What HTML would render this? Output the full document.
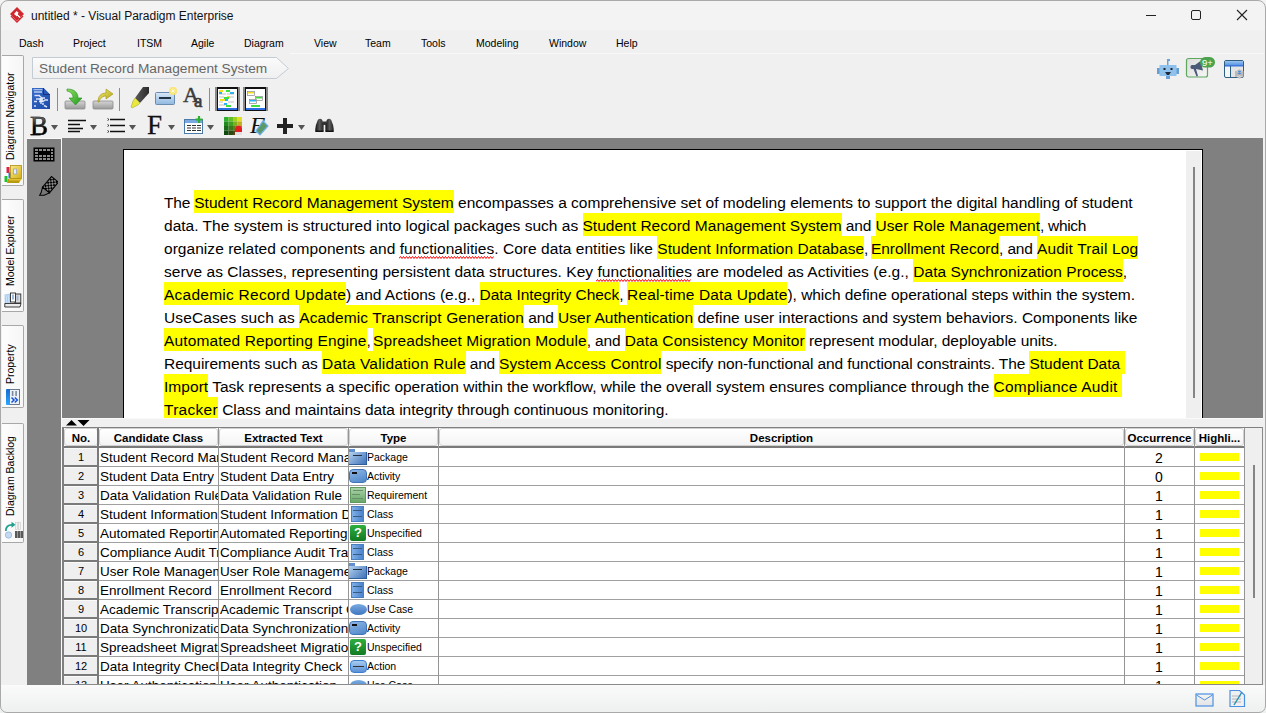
<!DOCTYPE html>
<html><head><meta charset="utf-8">
<style>
*{margin:0;padding:0;box-sizing:border-box}
html,body{width:1266px;height:713px;overflow:hidden;background:#f0f0f0;font-family:"Liberation Sans",sans-serif;color:#000}
.a{position:absolute}
#title{left:0;top:0;width:1266px;height:30px;background:#f3f3f3}
#menubar{left:0;top:31px;width:1266px;height:24px;background:#f0f0f0}
.mi{position:absolute;top:37px;font-size:10.5px;color:#000;white-space:pre}
#canvas{left:62px;top:138px;width:1201px;height:280px;background:#808080;overflow:hidden}
#vtool{left:27px;top:138px;width:34px;height:547px;background:#808080;border-top:1px solid #fafafa}
#page{left:61px;top:11px;width:1080px;height:400px;background:#fff;border:1px solid #000}
.ln{position:absolute;height:23px;line-height:25px;font-size:15.5px;white-space:pre;color:#000}
.hb{position:absolute;height:23px;background:#ffff00}
.h{position:relative}
.h0::before{left:0 !important}
.h::before{content:'';position:absolute;left:-1px;right:0;top:-4px;height:23px;background:#ffff00;z-index:-1}
.sp{}
#tclip{left:0;top:0;width:1263px;height:685px;overflow:hidden}
#tbg{left:62px;top:427px;width:1201px;height:257px;background:#fff}
.hd{position:absolute;top:428px;height:18px;background:linear-gradient(#ffffff,#f4f4f4);border:1px solid #d0d0d0;border-radius:3px;font-weight:bold;font-size:11.5px;line-height:18px;text-align:center;white-space:pre;overflow:hidden}
.rn{position:absolute;left:64px;width:34px;height:19px;background:#efefef;border-top:1px solid #fafafa;border-bottom:2px solid #7a7a7a;font-size:11px;line-height:16px;text-align:center}
.cl{position:absolute;height:18px;font-size:13.5px;line-height:20px;white-space:pre;overflow:hidden}
.ty{position:absolute;left:367px;height:18px;font-size:10.5px;line-height:19px;white-space:pre}
.oc{position:absolute;left:1124px;width:70px;height:18px;font-size:14px;line-height:20px;text-align:center}
.hl{position:absolute;left:1200px;width:39px;height:8px;background:#ffff00}
.gl{position:absolute;left:98px;width:1146px;height:1px;background:#a0a0a0}
.vl{position:absolute;top:428px;width:1px;height:258px;background:#959595}
.tab{position:absolute;left:2px;width:22px;background:linear-gradient(90deg,#fdfdfd,#f6f6f6);border:1px solid #a8a8a8;border-left:none;border-radius:0 2px 2px 0}
.vt{position:absolute;height:11px;font-size:10.5px;line-height:11px;white-space:pre;transform-origin:0 0;transform:rotate(-90deg)}
#status{left:0;top:685px;width:1266px;height:28px;background:linear-gradient(#fafafa,#eef0f0)}
</style></head><body>
<div id="title" class="a">
  <svg class="a" style="left:9px;top:6px" width="16" height="18" viewBox="0 0 16 18">
    <path d="M8 1 L15 8 L8 15 L1 8 Z" fill="#d0282e"/>
    <path d="M2 10 L8 16 L14 10" fill="none" stroke="#d0282e" stroke-width="1.3"/>
    <path d="M5 8 L7.5 5 L9.5 6.5 L8.8 8.5 L11.5 11 L10.3 12.5 Z" fill="#fff"/><path d="M8 10 L11 13" stroke="#d0282e" stroke-width="1"/>
  </svg>
  <div class="a" style="left:31px;top:9px;font-size:12px;white-space:pre;color:#111">untitled * - Visual Paradigm Enterprise</div>
  <div class="a" style="left:1146px;top:15px;width:10px;height:1px;background:#222"></div>
  <div class="a" style="left:1191px;top:10px;width:10px;height:10px;border:1px solid #222;border-radius:2px"></div>
  <svg class="a" style="left:1236px;top:9px" width="12" height="12" viewBox="0 0 12 12"><path d="M1 1 L11 11 M11 1 L1 11" stroke="#222" stroke-width="1.1"/></svg>
</div>
<div id="menubar" class="a"></div>
<div class="a" style="left:290px;top:53px;width:974px;height:1px;background:#f8f8f8"></div>
<div class="mi" style="left:19px">Dash</div><div class="mi" style="left:73px">Project</div><div class="mi" style="left:137px">ITSM</div><div class="mi" style="left:191px">Agile</div><div class="mi" style="left:244px">Diagram</div><div class="mi" style="left:314px">View</div><div class="mi" style="left:365px">Team</div><div class="mi" style="left:421px">Tools</div><div class="mi" style="left:476px">Modeling</div><div class="mi" style="left:549px">Window</div><div class="mi" style="left:616px">Help</div>
<!-- breadcrumb -->
<svg class="a" style="left:31px;top:56px" width="260" height="24" viewBox="0 0 260 24">
  <defs><linearGradient id="bcg" x1="0" y1="0" x2="0" y2="1"><stop offset="0" stop-color="#fbfbfb"/><stop offset="1" stop-color="#efefef"/></linearGradient></defs>
  <path d="M1.5 1.5 H245.5 L257.5 12.5 L245.5 22.5 H1.5 Z" fill="url(#bcg)" stroke="#c3ccd4" stroke-width="1"/>
</svg>
<div class="a" style="left:39px;top:61px;font-size:13.7px;color:#666;white-space:pre">Student Record Management System</div>
<!-- right icons -->
<svg class="a" style="left:1156px;top:58px" width="24" height="22" viewBox="0 0 24 22">
  <rect x="11" y="1" width="1.5" height="6" fill="#6aa0d8"/><rect x="12" y="1" width="2" height="2" fill="#6aa0d8"/>
  <rect x="1" y="10" width="3" height="6" fill="#6a9ed0"/><rect x="20" y="10" width="3" height="6" fill="#6a9ed0"/>
  <rect x="3.5" y="7" width="17" height="11" fill="#8ec2ec"/>
  <rect x="7.5" y="10" width="2" height="2" fill="#223"/><rect x="14.5" y="10" width="2" height="2" fill="#223"/>
  <path d="M9 14 h6 l-2 3 h-2z" fill="#1e2a3a"/>
  <rect x="10" y="18" width="4" height="3" fill="#6aa0d8"/>
</svg>
<svg class="a" style="left:1185px;top:56px" width="32" height="24" viewBox="0 0 32 24">
  <defs><linearGradient id="mg" x1="0" y1="0" x2="1" y2="1"><stop offset="0" stop-color="#dcdcdc"/><stop offset="1" stop-color="#f6f6f6"/></linearGradient></defs>
  <rect x="1.5" y="2.5" width="21" height="18.5" rx="2" fill="url(#mg)" stroke="#5ea85e" stroke-width="1.2"/>
  <path d="M5.5 10.5 C5.5 9.5 6.5 9 7.5 9 L10 9 L15.5 5 L18 14.5 L11 13 L13 20 L11.5 20.5 L8.5 13 L7 13 C6 13 5.5 12 5.5 11 Z" fill="#4b5a78"/>
  <rect x="15" y="1" width="15" height="10.5" rx="5.2" fill="#4ca34c"/>
  <text x="22.5" y="9.6" font-family="Liberation Sans" font-size="9.5" fill="#fff" text-anchor="middle">9+</text>
</svg>
<svg class="a" style="left:1223px;top:59px" width="24" height="22" viewBox="0 0 24 22">
  <defs><linearGradient id="lg" x1="0" y1="0" x2="0" y2="1"><stop offset="0" stop-color="#9cc4f0"/><stop offset="1" stop-color="#4a8be0"/></linearGradient></defs>
  <rect x="1.5" y="1.5" width="19" height="17" rx="1.5" fill="#f6f6f6" stroke="#2d5f80"/>
  <rect x="2" y="2" width="18" height="5" fill="url(#lg)"/>
  <rect x="1.5" y="6.5" width="19" height="1" fill="#2a60d0"/>
  <rect x="7" y="7" width="1" height="11.5" fill="#2d5f80"/>
  <rect x="8" y="8" width="12" height="10" fill="#e4e4e4"/>
  <path d="M12 17 l4.5 -2.2 l4.5 2.2 l-4.5 2.2z M12 15 l4.5 -2.2 l4.5 2.2 l-4.5 2.2z M12 13 l4.5 -2.2 l4.5 2.2 l-4.5 2.2z" fill="#dcdcdc" stroke="#9a9a9a" stroke-width="0.6"/>
  <path d="M14.5 12.5 l2 -1 l2 1 l-2 1z M14.5 14.5 l2 -1 l2 1 l-2 1z" fill="#4a8be0"/>
</svg>
<!-- toolbar row 1 -->
<svg class="a" style="left:31px;top:86px" width="22" height="25" viewBox="0 0 22 25">
  <defs><linearGradient id="dg" x1="0" y1="0" x2="1" y2="1"><stop offset="0" stop-color="#3a6cc8"/><stop offset="1" stop-color="#1c4aa8"/></linearGradient></defs>
  <path d="M1 2 H12.5 L19 8.5 V23 H1 Z" fill="url(#dg)"/>
  <path d="M12.5 2 L19 8.5 H12.5 Z" fill="#2a5ab8"/>
  <path d="M12.5 2 V8.5 H19" fill="none" stroke="#0e2a70" stroke-width="0.8"/>
  <rect x="2.5" y="3.2" width="9" height="1" fill="#c8d8f4"/>
  <rect x="3" y="5.2" width="8" height="1.6" fill="#b0c8f0"/>
  <path d="M3.5 9.5 H9 M8 9.5 L11 12 H14 M10 12 V18 M5 13 H10 M3 15.5 H6 M8 15.5 H12 L14 14 H17 M11 18 H13 M3 20 H5 M13 19.5 L16 21" stroke="#e8f0ff" stroke-width="1.4" fill="none" opacity="0.9"/>
  <rect x="8.5" y="12" width="3.5" height="4" fill="#e8f0ff" opacity="0.8"/>
</svg>
<div class="a" style="left:57px;top:88px;width:1px;height:23px;background:#8c8c8c"></div>
<svg class="a" style="left:63px;top:88px" width="24" height="24" viewBox="0 0 24 24">
  <defs><linearGradient id="tr" x1="0" y1="0" x2="0" y2="1"><stop offset="0" stop-color="#d6d6d6"/><stop offset="1" stop-color="#9a9a9a"/></linearGradient>
  <linearGradient id="ga" x1="0" y1="0" x2="1" y2="1"><stop offset="0" stop-color="#8ee05a"/><stop offset="1" stop-color="#1f9a1f"/></linearGradient></defs>
  <rect x="2" y="13" width="20" height="8" rx="1" fill="url(#tr)" stroke="#8a8a8a" stroke-width="0.8"/>
  <path d="M4 1 C12 1 15 5 15 10 H19 L12.5 17 L6 10 H10 C10 6 8 4 4 3 Z" fill="url(#ga)" stroke="#1e8a1e" stroke-width="0.6"/>
</svg>
<svg class="a" style="left:92px;top:88px" width="24" height="24" viewBox="0 0 24 24">
  <defs><linearGradient id="ya" x1="0" y1="0" x2="1" y2="1"><stop offset="0" stop-color="#f0ec70"/><stop offset="1" stop-color="#b0a010"/></linearGradient></defs>
  <rect x="1" y="13" width="20" height="8" rx="1" fill="url(#tr)" stroke="#8a8a8a" stroke-width="0.8"/>
  <path d="M6 14 C6 8 9 5 14 5 V1 L21 6 L14 11 V8 C11 8 8 10 7 14 Z" fill="url(#ya)" stroke="#a09010" stroke-width="0.6"/>
</svg>
<div class="a" style="left:119px;top:88px;width:1px;height:23px;background:#8c8c8c"></div>
<svg class="a" style="left:130px;top:86px" width="20" height="23" viewBox="0 0 20 23">
  <defs><linearGradient id="hg" x1="0" y1="0" x2="1" y2="0"><stop offset="0" stop-color="#5a5a5a"/><stop offset="1" stop-color="#2a2a2a"/></linearGradient></defs>
  <path d="M13 1 L19 1 L19 7 L10 17 L5 12 Z" fill="url(#hg)"/>
  <path d="M5 12 L10 17 L8 19 L2 22 L1 21 L3 15 Z" fill="#e8e840" stroke="#a0a010" stroke-width="0.5"/>
</svg>
<svg class="a" style="left:154px;top:86px" width="24" height="21" viewBox="0 0 24 21">
  <defs><linearGradient id="ng" x1="0" y1="0" x2="0" y2="1"><stop offset="0" stop-color="#d8e8f8"/><stop offset="1" stop-color="#90b8e0"/></linearGradient></defs>
  <rect x="1.5" y="6.5" width="19" height="12" rx="1" fill="url(#ng)" stroke="#6a8ab0"/>
  <rect x="5" y="11" width="12" height="2" fill="#223344"/>
  <circle cx="19" cy="5" r="4" fill="#f8e060"/>
  <path d="M19 1.5v7M15.5 5h7M16.5 2.5l5 5M21.5 2.5l-5 5" stroke="#fff" stroke-width="0.6"/>
</svg>
<div class="a" style="left:183px;top:83px;font-family:'Liberation Serif',serif;font-size:22px;line-height:24px;color:#3a3a3a;white-space:pre;-webkit-text-stroke:0.5px #3a3a3a">A</div>
<div class="a" style="left:194px;top:90px;font-family:'Liberation Serif',serif;font-size:19px;line-height:22px;color:#3a3a3a;white-space:pre;-webkit-text-stroke:0.6px #3a3a3a">a</div>
<div class="a" style="left:209px;top:88px;width:1px;height:23px;background:#8c8c8c"></div>
<svg class="a" style="left:215px;top:87px" width="25" height="24" viewBox="0 0 25 24">
  <rect x="0" y="0" width="25" height="24" fill="#8a8a8a"/>
  <rect x="2" y="0" width="21" height="24" fill="#111"/>
  <rect x="3" y="2" width="19" height="19" fill="#fff"/>
  <rect x="4" y="3" width="4" height="2" fill="#f8e020"/><rect x="11" y="3" width="4" height="2" fill="#40e040"/>
  <rect x="4" y="5" width="3" height="2" fill="#20b8f8"/><rect x="15" y="5" width="4" height="2" fill="#20b8f8"/>
  <rect x="12" y="9" width="3" height="2" fill="#f8e020"/><rect x="9" y="10" width="5" height="2" fill="#40e040"/>
  <rect x="5" y="12" width="5" height="2" fill="#f8e020"/><rect x="10" y="12" width="3" height="2" fill="#20b8f8"/>
  <rect x="9" y="16" width="3" height="2" fill="#20b8f8"/><rect x="11" y="18" width="5" height="2" fill="#40e040"/>
  <path d="M4 7h7 M12 7h7 M4 10h5 M15 10h4 M4 15h4 M13 15h6 M4 18h6" stroke="#999" stroke-width="0.6"/>
  <rect x="3" y="21" width="19" height="2" fill="#2a70e0"/>
</svg>
<svg class="a" style="left:243px;top:87px" width="25" height="24" viewBox="0 0 25 24">
  <rect x="0" y="0" width="25" height="24" fill="#8a8a8a"/>
  <rect x="2" y="0" width="21" height="24" fill="#111"/>
  <rect x="3" y="2" width="19" height="19" fill="#fff"/>
  <rect x="4.5" y="4.5" width="7" height="4" fill="#fff" stroke="#888" stroke-width="0.7"/><rect x="5" y="5" width="6" height="1.5" fill="#f8e020"/>
  <rect x="12.5" y="9.5" width="7" height="4" fill="#fff" stroke="#888" stroke-width="0.7"/><rect x="13" y="10" width="6" height="1.5" fill="#40e040"/>
  <rect x="6.5" y="12.5" width="7" height="4" fill="#fff" stroke="#888" stroke-width="0.7"/><rect x="7" y="13" width="6" height="1.5" fill="#20b8f8"/>
  <rect x="8" y="18" width="9" height="2" fill="#40e040"/>
  <rect x="3" y="21" width="19" height="2" fill="#2a70e0"/>
</svg>
<!-- toolbar row 2 -->
<div class="a" style="left:30px;top:111px;font-family:'Liberation Serif',serif;font-size:27px;line-height:31px;white-space:pre;background:linear-gradient(#888 10%,#000 55%);-webkit-background-clip:text;background-clip:text;color:transparent;-webkit-text-stroke:0.4px #222">B</div>
<svg class="a" style="left:51px;top:125px" width="7" height="5"><path d="M0 0H7L3.5 5Z" fill="#555"/></svg>
<svg class="a" style="left:68px;top:119px" width="19" height="14"><path d="M0 1.5H18M0 5.5H12M0 9.5H15M0 12.5H12" stroke="#111" stroke-width="1.3"/></svg>
<svg class="a" style="left:90px;top:125px" width="7" height="5"><path d="M0 0H7L3.5 5Z" fill="#555"/></svg>
<svg class="a" style="left:107px;top:117px" width="19" height="16"><path d="M3 2.5H18M3 8.5H18M3 14.5H18" stroke="#111" stroke-width="1.3"/><path d="M0.5 1.5 l1.5 1 l-1.5 1 M0.5 7.5 l1.5 1 l-1.5 1 M0.5 13.5 l1.5 1 l-1.5 1" stroke="#111" stroke-width="0.8" fill="none"/></svg>
<svg class="a" style="left:129px;top:125px" width="7" height="5"><path d="M0 0H7L3.5 5Z" fill="#555"/></svg>
<div class="a" style="left:147px;top:110px;font-family:'Liberation Serif',serif;font-size:27px;line-height:31px;color:#111;white-space:pre;-webkit-text-stroke:0.3px #111">F</div>
<svg class="a" style="left:168px;top:125px" width="7" height="5"><path d="M0 0H7L3.5 5Z" fill="#555"/></svg>
<svg class="a" style="left:184px;top:116px" width="20" height="19" viewBox="0 0 20 19">
  <rect x="0.5" y="3.5" width="18" height="14" fill="#fff" stroke="#4a7aa8"/>
  <rect x="1" y="4" width="17" height="3" fill="#7aa8e0"/>
  <path d="M3 9.5h4M8 9.5h4M13 9.5h4M3 12h4M8 12h4M13 12h4M3 14.5h4M8 14.5h4M13 14.5h4" stroke="#333" stroke-width="1.2"/>
  <path d="M15 0v7M11.5 3.5h7" stroke="#30b030" stroke-width="2.2"/>
</svg>
<svg class="a" style="left:207px;top:125px" width="7" height="5"><path d="M0 0H7L3.5 5Z" fill="#555"/></svg>
<svg class="a" style="left:224px;top:117px" width="18" height="18" viewBox="0 0 18 18">
  <rect x="0" y="0" width="4.5" height="4.5" fill="#30b030"/><rect x="4.5" y="0" width="4.5" height="4.5" fill="#60c020"/><rect x="9" y="0" width="4.5" height="4.5" fill="#a0d020"/><rect x="13.5" y="0" width="4.5" height="4.5" fill="#e0e020"/>
  <rect x="0" y="4.5" width="4.5" height="4.5" fill="#208a20"/><rect x="4.5" y="4.5" width="4.5" height="4.5" fill="#40a020"/><rect x="9" y="4.5" width="4.5" height="4.5" fill="#80b020"/><rect x="13.5" y="4.5" width="4.5" height="4.5" fill="#c0b020"/>
  <rect x="0" y="9" width="4.5" height="4.5" fill="#1a6a1a"/><rect x="4.5" y="9" width="4.5" height="4.5" fill="#3a7a1a"/><rect x="9" y="9" width="4.5" height="4.5" fill="#707a1a"/><rect x="13.5" y="9" width="4.5" height="4.5" fill="#a07a1a"/>
  <rect x="0" y="13.5" width="4.5" height="4.5" fill="#104a10"/><rect x="4.5" y="13.5" width="4.5" height="4.5" fill="#2a4a10"/><rect x="9" y="13.5" width="4.5" height="4.5" fill="#604010"/><rect x="13.5" y="13.5" width="4.5" height="4.5" fill="#905010"/>
  <path d="M11 18 V12 a3.5 3.5 0 0 1 7 0 V18z" fill="#e0e0e0"/>
  <path d="M11 12 a3.5 3.5 0 0 1 7 0 v3 h-7z" fill="#e02020"/>
</svg>
<div class="a" style="left:250px;top:110px;font-family:'Liberation Serif',serif;font-style:italic;font-size:24px;line-height:30px;color:#111;white-space:pre">F</div>
<svg class="a" style="left:255px;top:120px" width="14" height="16" viewBox="0 0 14 16"><path d="M8 1 L13 6 L5 15 L1 11 Z" fill="#5a9a6a" stroke="#70b0e8" stroke-width="1.2"/></svg>
<svg class="a" style="left:277px;top:118px" width="16" height="16"><path d="M8 0v16M0 8h16" stroke="#222" stroke-width="4"/></svg>
<svg class="a" style="left:298px;top:125px" width="7" height="5"><path d="M0 0H7L3.5 5Z" fill="#555"/></svg>
<svg class="a" style="left:315px;top:118px" width="19" height="15" viewBox="0 0 19 15">
  <defs><linearGradient id="bn" x1="0" y1="0" x2="1" y2="0"><stop offset="0" stop-color="#111"/><stop offset="0.5" stop-color="#5a5a5a"/><stop offset="1" stop-color="#222"/></linearGradient></defs>
  <path d="M2.8 2 Q5 -0.6 7.2 2 L8.6 7 V13 H0.3 V11 Q0.3 7.5 2.8 2 Z" fill="url(#bn)"/>
  <path d="M16.2 2 Q14 -0.6 11.8 2 L10.4 7 V13 H18.7 V11 Q18.7 7.5 16.2 2 Z" fill="url(#bn)"/>
  <rect x="7.5" y="3.5" width="4" height="3.5" fill="#333"/>
  <rect x="0.3" y="12.6" width="8.3" height="1.4" fill="#111"/><rect x="10.4" y="12.6" width="8.3" height="1.4" fill="#111"/>
</svg>
<!-- left tabs -->
<div class="tab" style="top:55px;height:131px"></div>
<div class="vt" style="left:5px;top:160px;width:88px">Diagram Navigator</div>
<div class="tab" style="top:199px;height:113px"></div>
<div class="vt" style="left:5px;top:286px;width:70px">Model Explorer</div>
<div class="tab" style="top:325px;height:83px"></div>
<div class="vt" style="left:5px;top:384px;width:42px">Property</div>
<div class="tab" style="top:423px;height:120px"></div>
<div class="vt" style="left:5px;top:516px;width:78px">Diagram Backlog</div>
<svg class="a" style="left:4px;top:165px" width="19" height="19" viewBox="0 0 19 19">
  <defs><linearGradient id="bk" x1="0" y1="0" x2="1" y2="1"><stop offset="0" stop-color="#fbe98a"/><stop offset="1" stop-color="#d2b01a"/></linearGradient></defs>
  <rect x="2.5" y="2" width="3" height="6" fill="#e0204a"/>
  <rect x="4.5" y="7.5" width="3" height="6" fill="#1e7ee0"/>
  <rect x="0.5" y="11" width="3" height="6" fill="#20c030"/>
  <path d="M4 14 H17 L15 18 H3 Z" fill="#b89a10"/>
  <path d="M5 13 H18 L17 15.5 H5 Z" fill="#e0c030"/>
  <rect x="6.5" y="0.5" width="11" height="13" fill="url(#bk)" stroke="#b09010" stroke-width="0.8"/>
  <rect x="9.5" y="4" width="3" height="5" fill="#e8f0ff" stroke="#8a9ac8" stroke-width="0.7"/>
</svg>
<svg class="a" style="left:4px;top:292px" width="18" height="16" viewBox="0 0 18 16">
  <path d="M0.5 2.5 L6.5 1.5 L6.5 11 L0.8 12 Z" fill="#a8ccf0"/>
  <path d="M2 3 L3 11 M4 2.5 L5 11" stroke="#d8ecff" stroke-width="0.8"/>
  <rect x="11" y="2" width="5.8" height="9" fill="#dcdcdc" stroke="#2a2a2a" stroke-width="0.9"/>
  <rect x="12.5" y="3.5" width="2" height="5" fill="#a0b8d8"/>
  <rect x="6.5" y="1" width="5" height="9" fill="#fff" stroke="#2a2a2a" stroke-width="0.9"/>
  <rect x="8" y="2.5" width="2" height="5" fill="#9ab8e0"/>
  <path d="M0.8 11.5 H17 L16 15 H0.8 Z" fill="#ececec" stroke="#2a2a2a" stroke-width="0.9"/>
</svg>
<svg class="a" style="left:6px;top:389px" width="14" height="16" viewBox="0 0 14 16">
  <defs><linearGradient id="pb" x1="0" y1="0" x2="0" y2="1"><stop offset="0" stop-color="#1a6ad0"/><stop offset="1" stop-color="#2aa8ff"/></linearGradient></defs>
  <rect x="3.5" y="0.5" width="10" height="15" fill="#eef2f8" stroke="#4a5a70" stroke-width="0.8"/>
  <rect x="0" y="0" width="4" height="16" rx="1" fill="url(#pb)"/>
  <rect x="5.8" y="2" width="1.6" height="5" fill="#7a8aa0"/><rect x="9.3" y="2" width="1.6" height="5" fill="#7a8aa0"/>
  <path d="M5.5 8.5 L8 11 L5.5 13.5 M8.8 8.5 L11.3 11 L8.8 13.5" stroke="#1a5ad8" stroke-width="1.6" fill="none"/>
</svg>
<svg class="a" style="left:4px;top:521px" width="19" height="18" viewBox="0 0 19 18">
  <rect x="11.3" y="1.3" width="2.2" height="7" fill="#f4f4f4" stroke="#c8c8c8" stroke-width="0.6"/>
  <rect x="14.3" y="1.3" width="2.2" height="7" fill="#f4f4f4" stroke="#c8c8c8" stroke-width="0.6"/>
  <rect x="11" y="10" width="2.6" height="7" fill="#5a5a5a"/><rect x="14" y="10" width="2.6" height="7" fill="#5a5a5a"/><rect x="17" y="10" width="2" height="7" fill="#5a5a5a"/>
  <circle cx="4.5" cy="14" r="3.2" fill="#c4daf2" stroke="#8ab0dc" stroke-width="0.7"/>
  <path d="M1.8 10 C1.8 6 4 3.8 8 3.8" stroke="#1ea08e" stroke-width="1.8" fill="none"/>
  <path d="M7.5 0.8 L11.5 3.8 L7.5 6.8 Z" fill="#1ea08e"/>
</svg>
<div id="vtool" class="a"></div>
<div id="canvas" class="a"><div id="page" class="a"></div><div class="ln" style="left:102.0px;top:52px;letter-spacing:-0.2039px">The </div><div class="hb" style="left:132.2px;top:52px;width:259.6px"></div><div class="ln" style="left:132.2px;top:52px;letter-spacing:0.0354px">Student Record Management System</div><div class="ln" style="left:391.8px;top:52px;letter-spacing:0.0072px"> encompasses a comprehensive set of modeling elements to support the digital handling of student</div><div class="ln" style="left:102.0px;top:75px;letter-spacing:0.0154px">data. The system is structured into logical packages such as </div><div class="hb" style="left:520.5px;top:75px;width:259.1px"></div><div class="ln" style="left:520.5px;top:75px;letter-spacing:0.0197px">Student Record Management System</div><div class="ln" style="left:779.6px;top:75px;letter-spacing:-0.1169px"> and </div><div class="hb" style="left:813.5px;top:75px;width:164.6px"></div><div class="ln" style="left:813.5px;top:75px;letter-spacing:0.0448px">User Role Management</div><div class="ln" style="left:978.1px;top:75px;letter-spacing:-0.3214px">, which</div><div class="ln" style="left:102.0px;top:98px;letter-spacing:0.0416px">organize related components and functionalities. Core data entities like </div><div class="hb" style="left:595.3px;top:98px;width:206.8px"></div><div class="ln" style="left:595.3px;top:98px;letter-spacing:0.0308px">Student Information Database</div><div class="ln" style="left:802.1px;top:98px;letter-spacing:-0.5px">, </div><div class="hb" style="left:808.9px;top:98px;width:128.2px"></div><div class="ln" style="left:808.9px;top:98px;letter-spacing:-0.0094px">Enrollment Record</div><div class="ln" style="left:937.1px;top:98px;letter-spacing:-0.1635px">, and </div><div class="hb" style="left:974.9px;top:98px;width:101.4px"></div><div class="ln" style="left:974.9px;top:98px;letter-spacing:0.1537px">Audit Trail Log</div><div class="ln" style="left:102.0px;top:121px;letter-spacing:0.0432px">serve as Classes, representing persistent data structures. Key functionalities are modeled as Activities (e.g., </div><div class="hb" style="left:851.2px;top:121px;width:209.6px"></div><div class="ln" style="left:851.2px;top:121px;letter-spacing:0.07px">Data Synchronization Process</div><div class="ln" style="left:1060.8px;top:121px;letter-spacing:-0.1125px">,</div><div class="hb" style="left:102.0px;top:144px;width:182.1px"></div><div class="ln" style="left:102.0px;top:144px;letter-spacing:0.2489px">Academic Record Update</div><div class="ln" style="left:284.1px;top:144px;letter-spacing:-0.007px">) and Actions (e.g., </div><div class="hb" style="left:417.5px;top:144px;width:139.8px"></div><div class="ln" style="left:417.5px;top:144px;letter-spacing:-0.0319px">Data Integrity Check</div><div class="ln" style="left:557.3px;top:144px;letter-spacing:-0.4125px">, </div><div class="hb" style="left:565.1px;top:144px;width:160.4px"></div><div class="ln" style="left:565.1px;top:144px;letter-spacing:0.1299px">Real-time Data Update</div><div class="ln" style="left:725.5px;top:144px;letter-spacing:-0.0461px">), which define operational steps within the system.</div><div class="ln" style="left:102.0px;top:167px;letter-spacing:0.104px">UseCases such as </div><div class="hb" style="left:237.3px;top:167px;width:224.6px"></div><div class="ln" style="left:237.3px;top:167px;letter-spacing:0.1065px">Academic Transcript Generation</div><div class="ln" style="left:461.9px;top:167px;letter-spacing:-0.0569px"> and </div><div class="hb" style="left:496.1px;top:167px;width:135.0px"></div><div class="ln" style="left:496.1px;top:167px;letter-spacing:0.0304px">User Authentication</div><div class="ln" style="left:631.1px;top:167px;letter-spacing:0.0111px"> define user interactions and system behaviors. Components like</div><div class="hb" style="left:102.0px;top:190px;width:202.6px"></div><div class="ln" style="left:102.0px;top:190px;letter-spacing:0.1361px">Automated Reporting Engine</div><div class="ln" style="left:304.6px;top:190px;letter-spacing:-0.5px">, </div><div class="hb" style="left:311.1px;top:190px;width:213.6px"></div><div class="ln" style="left:311.1px;top:190px;letter-spacing:0.089px">Spreadsheet Migration Module</div><div class="ln" style="left:524.7px;top:190px;letter-spacing:-0.1135px">, and </div><div class="hb" style="left:562.8px;top:190px;width:179.9px"></div><div class="ln" style="left:562.8px;top:190px;letter-spacing:0.1013px">Data Consistency Monitor</div><div class="ln" style="left:742.7px;top:190px;letter-spacing:-0.0375px"> represent modular, deployable units.</div><div class="ln" style="left:102.0px;top:213px;letter-spacing:-0.0253px">Requirements such as </div><div class="hb" style="left:260.0px;top:213px;width:143.8px"></div><div class="ln" style="left:260.0px;top:213px;letter-spacing:0.1814px">Data Validation Rule</div><div class="ln" style="left:403.8px;top:213px;letter-spacing:-0.2769px"> and </div><div class="hb" style="left:436.9px;top:213px;width:162.6px"></div><div class="ln" style="left:436.9px;top:213px;letter-spacing:0.1543px">System Access Control</div><div class="ln" style="left:599.5px;top:213px;letter-spacing:-0.1031px"> specify non-functional and functional constraints. The </div><div class="hb" style="left:967.4px;top:213px;width:95.2px"></div><div class="ln" style="left:967.4px;top:213px;letter-spacing:0.031px">Student Data </div><div class="hb" style="left:102.0px;top:236px;width:44.2px"></div><div class="ln" style="left:102.0px;top:236px;letter-spacing:0.0437px">Import</div><div class="ln" style="left:146.2px;top:236px;letter-spacing:-0.0154px"> Task represents a specific operation within the workflow, while the overall system ensures compliance through the </div><div class="hb" style="left:931.6px;top:236px;width:128.5px"></div><div class="ln" style="left:931.6px;top:236px;letter-spacing:0.2096px">Compliance Audit </div><div class="hb" style="left:102.0px;top:259px;width:53.9px"></div><div class="ln" style="left:102.0px;top:259px;letter-spacing:0.2759px">Tracker</div><div class="ln" style="left:155.9px;top:259px;letter-spacing:-0.0527px"> Class and maintains data integrity through continuous monitoring.</div>
<div class="a" style="left:1124px;top:13px;width:15px;height:280px;background:#efefef"></div>
<div class="a" style="left:1131px;top:29px;width:2px;height:231px;background:#858585"></div>
</div>
<div class="a" style="left:61px;top:138px;width:1px;height:547px;background:#fafafa"></div>
<svg class="a" style="left:399px;top:256px" width="96" height="3"><path d="M0 2.5 L1.5 0.5 L3.0 2.5 L4.5 0.5 L6.0 2.5 L7.5 0.5 L9.0 2.5 L10.5 0.5 L12.0 2.5 L13.5 0.5 L15.0 2.5 L16.5 0.5 L18.0 2.5 L19.5 0.5 L21.0 2.5 L22.5 0.5 L24.0 2.5 L25.5 0.5 L27.0 2.5 L28.5 0.5 L30.0 2.5 L31.5 0.5 L33.0 2.5 L34.5 0.5 L36.0 2.5 L37.5 0.5 L39.0 2.5 L40.5 0.5 L42.0 2.5 L43.5 0.5 L45.0 2.5 L46.5 0.5 L48.0 2.5 L49.5 0.5 L51.0 2.5 L52.5 0.5 L54.0 2.5 L55.5 0.5 L57.0 2.5 L58.5 0.5 L60.0 2.5 L61.5 0.5 L63.0 2.5 L64.5 0.5 L66.0 2.5 L67.5 0.5 L69.0 2.5 L70.5 0.5 L72.0 2.5 L73.5 0.5 L75.0 2.5 L76.5 0.5 L78.0 2.5 L79.5 0.5 L81.0 2.5 L82.5 0.5 L84.0 2.5 L85.5 0.5 L87.0 2.5 L88.5 0.5 L90.0 2.5 L91.5 0.5 L93.0 2.5 L94.5 0.5" stroke="#ff0000" stroke-width="1" fill="none"/></svg>
<svg class="a" style="left:596px;top:279px" width="96" height="3"><path d="M0 2.5 L1.5 0.5 L3.0 2.5 L4.5 0.5 L6.0 2.5 L7.5 0.5 L9.0 2.5 L10.5 0.5 L12.0 2.5 L13.5 0.5 L15.0 2.5 L16.5 0.5 L18.0 2.5 L19.5 0.5 L21.0 2.5 L22.5 0.5 L24.0 2.5 L25.5 0.5 L27.0 2.5 L28.5 0.5 L30.0 2.5 L31.5 0.5 L33.0 2.5 L34.5 0.5 L36.0 2.5 L37.5 0.5 L39.0 2.5 L40.5 0.5 L42.0 2.5 L43.5 0.5 L45.0 2.5 L46.5 0.5 L48.0 2.5 L49.5 0.5 L51.0 2.5 L52.5 0.5 L54.0 2.5 L55.5 0.5 L57.0 2.5 L58.5 0.5 L60.0 2.5 L61.5 0.5 L63.0 2.5 L64.5 0.5 L66.0 2.5 L67.5 0.5 L69.0 2.5 L70.5 0.5 L72.0 2.5 L73.5 0.5 L75.0 2.5 L76.5 0.5 L78.0 2.5 L79.5 0.5 L81.0 2.5 L82.5 0.5 L84.0 2.5 L85.5 0.5 L87.0 2.5 L88.5 0.5 L90.0 2.5 L91.5 0.5 L93.0 2.5 L94.5 0.5" stroke="#ff0000" stroke-width="1" fill="none"/></svg>
<div class="a" style="left:62px;top:418px;width:1201px;height:1px;background:#fafafa"></div>
<svg class="a" style="left:65px;top:419px" width="26" height="8" viewBox="0 0 26 8"><path d="M1 6.5 L6.5 1 L12 6.5Z M12.5 1 H24.5 L18.5 7Z" fill="#000"/></svg>
<svg class="a" style="left:33px;top:147px" width="22" height="15" viewBox="0 0 22 15">
  <rect x="0.5" y="0.5" width="21" height="14" fill="#000"/>
  <g fill="#8a8a8a">
  <rect x="2" y="2" width="3" height="2"/><rect x="6" y="2" width="3" height="2"/><rect x="10" y="2" width="3" height="2"/><rect x="14" y="2" width="3" height="2"/><rect x="18" y="2" width="2" height="2"/>
  <rect x="2" y="5" width="3" height="2"/><rect x="18" y="5" width="2" height="2"/>
  <rect x="2" y="8" width="3" height="2"/><rect x="6" y="8" width="3" height="2"/><rect x="10" y="8" width="3" height="2"/><rect x="14" y="8" width="3" height="2"/><rect x="18" y="8" width="2" height="2"/>
  <rect x="2" y="11" width="3" height="2"/><rect x="6" y="11" width="3" height="2"/><rect x="10" y="11" width="3" height="2"/><rect x="14" y="11" width="3" height="2"/><rect x="18" y="11" width="2" height="2"/>
  </g>
</svg>
<svg class="a" style="left:36px;top:176px" width="22" height="25" viewBox="0 0 22 25">
  <defs><pattern id="chk" width="4" height="4" patternUnits="userSpaceOnUse"><rect width="4" height="4" fill="#8a8a8a"/><rect width="2" height="2" fill="#000"/><rect x="2" y="2" width="2" height="2" fill="#000"/></pattern></defs>
  <g transform="translate(12.5 11) rotate(40)">
    <rect x="-4.5" y="-10" width="9" height="14" fill="url(#chk)" stroke="#000" stroke-width="1"/>
    <path d="M-4.5 4 L4.5 4 L2 9 L-1.5 12 L-2 9 Z" fill="#777" stroke="#000" stroke-width="1"/>
  </g>
</svg>

<div id="tclip" class="a">
<div id="tbg" class="a"></div>
<div class="a" style="left:62px;top:427px;width:1201px;height:1px;background:#808080"></div>
<div class="a" style="left:62px;top:427px;width:2px;height:260px;background:#808080"></div>
  <div class="hd" style="left:64px;width:34px">No.</div>
  <div class="hd" style="left:99px;width:119px">Candidate Class</div>
  <div class="hd" style="left:219px;width:129px">Extracted Text</div>
  <div class="hd" style="left:349px;width:89px">Type</div>
  <div class="hd" style="left:439px;width:685px">Description</div>
  <div class="hd" style="left:1125px;width:69px">Occurrence</div>
  <div class="hd" style="left:1195px;width:49px">Highli...</div>
  <div class="a" style="left:64px;top:446px;width:1180px;height:2px;background:#7a7a7a"></div>
  <div class="rn" style="top:448px">1</div><div class="cl" style="top:448px;left:100px;width:118px">Student Record Management System</div><div class="cl" style="top:448px;left:220px;width:128px">Student Record Management System</div><div class="ty" style="top:448px">Package</div><div class="oc" style="top:448px">2</div><div class="hl" style="top:453px"></div><div class="gl" style="top:466px"></div><div class="rn" style="top:467px">2</div><div class="cl" style="top:467px;left:100px;width:118px">Student Data Entry</div><div class="cl" style="top:467px;left:220px;width:128px">Student Data Entry</div><div class="ty" style="top:467px">Activity</div><div class="oc" style="top:467px">0</div><div class="hl" style="top:472px"></div><div class="gl" style="top:485px"></div><div class="rn" style="top:486px">3</div><div class="cl" style="top:486px;left:100px;width:118px">Data Validation Rule</div><div class="cl" style="top:486px;left:220px;width:128px">Data Validation Rule</div><div class="ty" style="top:486px">Requirement</div><div class="oc" style="top:486px">1</div><div class="hl" style="top:491px"></div><div class="gl" style="top:504px"></div><div class="rn" style="top:505px">4</div><div class="cl" style="top:505px;left:100px;width:118px">Student Information Database</div><div class="cl" style="top:505px;left:220px;width:128px">Student Information Database</div><div class="ty" style="top:505px">Class</div><div class="oc" style="top:505px">1</div><div class="hl" style="top:510px"></div><div class="gl" style="top:523px"></div><div class="rn" style="top:524px">5</div><div class="cl" style="top:524px;left:100px;width:118px">Automated Reporting Engine</div><div class="cl" style="top:524px;left:220px;width:128px">Automated Reporting Engine</div><div class="ty" style="top:524px">Unspecified</div><div class="oc" style="top:524px">1</div><div class="hl" style="top:529px"></div><div class="gl" style="top:542px"></div><div class="rn" style="top:543px">6</div><div class="cl" style="top:543px;left:100px;width:118px">Compliance Audit Tracker</div><div class="cl" style="top:543px;left:220px;width:128px">Compliance Audit Tracker</div><div class="ty" style="top:543px">Class</div><div class="oc" style="top:543px">1</div><div class="hl" style="top:548px"></div><div class="gl" style="top:561px"></div><div class="rn" style="top:562px">7</div><div class="cl" style="top:562px;left:100px;width:118px">User Role Management</div><div class="cl" style="top:562px;left:220px;width:128px">User Role Management</div><div class="ty" style="top:562px">Package</div><div class="oc" style="top:562px">1</div><div class="hl" style="top:567px"></div><div class="gl" style="top:580px"></div><div class="rn" style="top:581px">8</div><div class="cl" style="top:581px;left:100px;width:118px">Enrollment Record</div><div class="cl" style="top:581px;left:220px;width:128px">Enrollment Record</div><div class="ty" style="top:581px">Class</div><div class="oc" style="top:581px">1</div><div class="hl" style="top:586px"></div><div class="gl" style="top:599px"></div><div class="rn" style="top:600px">9</div><div class="cl" style="top:600px;left:100px;width:118px">Academic Transcript Generation</div><div class="cl" style="top:600px;left:220px;width:128px">Academic Transcript Generation</div><div class="ty" style="top:600px">Use Case</div><div class="oc" style="top:600px">1</div><div class="hl" style="top:605px"></div><div class="gl" style="top:618px"></div><div class="rn" style="top:619px">10</div><div class="cl" style="top:619px;left:100px;width:118px">Data Synchronization Process</div><div class="cl" style="top:619px;left:220px;width:128px">Data Synchronization Process</div><div class="ty" style="top:619px">Activity</div><div class="oc" style="top:619px">1</div><div class="hl" style="top:624px"></div><div class="gl" style="top:637px"></div><div class="rn" style="top:638px">11</div><div class="cl" style="top:638px;left:100px;width:118px">Spreadsheet Migration Module</div><div class="cl" style="top:638px;left:220px;width:128px">Spreadsheet Migration Module</div><div class="ty" style="top:638px">Unspecified</div><div class="oc" style="top:638px">1</div><div class="hl" style="top:643px"></div><div class="gl" style="top:656px"></div><div class="rn" style="top:657px">12</div><div class="cl" style="top:657px;left:100px;width:118px">Data Integrity Check</div><div class="cl" style="top:657px;left:220px;width:128px">Data Integrity Check</div><div class="ty" style="top:657px">Action</div><div class="oc" style="top:657px">1</div><div class="hl" style="top:662px"></div><div class="gl" style="top:675px"></div><div class="rn" style="top:676px">13</div><div class="cl" style="top:676px;left:100px;width:118px">User Authentication</div><div class="cl" style="top:676px;left:220px;width:128px">User Authentication</div><div class="ty" style="top:676px">Use Case</div><div class="oc" style="top:676px">1</div><div class="hl" style="top:681px"></div><div class="gl" style="top:694px"></div>
  <div class="vl" style="left:97px;width:2px;background:#7a7a7a"></div>
  <div class="vl" style="left:218px"></div>
  <div class="vl" style="left:348px"></div>
  <div class="vl" style="left:438px"></div>
  <div class="vl" style="left:1124px"></div>
  <div class="vl" style="left:1194px"></div>
  <div class="vl" style="left:1244px;top:428px"></div>
  <div class="a" style="left:349px;top:449px;width:6px;height:4px;background:#5f8fcf"></div><div class="a" style="left:349px;top:452px;width:18px;height:13px;background:linear-gradient(135deg,#b6d2f0,#3e72b8);border-right:1px solid #2f5e9e;border-bottom:1px solid #2f5e9e"></div><div class="a" style="left:353px;top:455px;width:9px;height:1px;background:#203040"></div><div class="a" style="left:349px;top:469px;width:18px;height:14px;border-radius:4px;background:linear-gradient(160deg,#8db6e6,#4f86c8);border:1px solid #3f74b8"></div><div class="a" style="left:352px;top:472px;width:5px;height:2px;background:#111"></div><div class="a" style="left:350px;top:487px;width:16px;height:16px;background:linear-gradient(180deg,#a9d3a9,#6aa86a);border:1px solid #5f9a5f"></div><div class="a" style="left:353px;top:490px;width:10px;height:1px;background:#6a8f6a"></div><div class="a" style="left:352px;top:494px;width:8px;height:1px;background:#6a8f6a"></div><div class="a" style="left:352px;top:498px;width:11px;height:1px;background:#6a8f6a"></div><div class="a" style="left:351px;top:506px;width:13px;height:16px;background:linear-gradient(90deg,#7fb0e8,#4a82cc);border:1px solid #4a7fc0"></div><div class="a" style="left:353px;top:510px;width:9px;height:1px;background:#3a5a80"></div><div class="a" style="left:353px;top:516px;width:9px;height:1px;background:#3a5a80"></div><div class="a" style="left:350px;top:525px;width:16px;height:16px;border-radius:2px;background:linear-gradient(180deg,#2fae3f,#127a22);color:#fff;font:bold 13px/16px 'Liberation Sans',sans-serif;text-align:center">?</div><div class="a" style="left:351px;top:544px;width:13px;height:16px;background:linear-gradient(90deg,#7fb0e8,#4a82cc);border:1px solid #4a7fc0"></div><div class="a" style="left:353px;top:548px;width:9px;height:1px;background:#3a5a80"></div><div class="a" style="left:353px;top:554px;width:9px;height:1px;background:#3a5a80"></div><div class="a" style="left:349px;top:563px;width:6px;height:4px;background:#5f8fcf"></div><div class="a" style="left:349px;top:566px;width:18px;height:13px;background:linear-gradient(135deg,#b6d2f0,#3e72b8);border-right:1px solid #2f5e9e;border-bottom:1px solid #2f5e9e"></div><div class="a" style="left:353px;top:569px;width:9px;height:1px;background:#203040"></div><div class="a" style="left:351px;top:582px;width:13px;height:16px;background:linear-gradient(90deg,#7fb0e8,#4a82cc);border:1px solid #4a7fc0"></div><div class="a" style="left:353px;top:586px;width:9px;height:1px;background:#3a5a80"></div><div class="a" style="left:353px;top:592px;width:9px;height:1px;background:#3a5a80"></div><div class="a" style="left:350px;top:604px;width:17px;height:11px;border-radius:50%;background:linear-gradient(180deg,#7aaae0,#3f76c0)"></div><div class="a" style="left:349px;top:621px;width:18px;height:14px;border-radius:4px;background:linear-gradient(160deg,#8db6e6,#4f86c8);border:1px solid #3f74b8"></div><div class="a" style="left:352px;top:624px;width:5px;height:2px;background:#111"></div><div class="a" style="left:350px;top:639px;width:16px;height:16px;border-radius:2px;background:linear-gradient(180deg,#2fae3f,#127a22);color:#fff;font:bold 13px/16px 'Liberation Sans',sans-serif;text-align:center">?</div><div class="a" style="left:350px;top:660px;width:17px;height:13px;border-radius:4px;background:linear-gradient(180deg,#a8cbf0,#5a90d6);border:1px solid #3c7ed0"></div><div class="a" style="left:353px;top:666px;width:11px;height:1px;background:#333"></div><div class="a" style="left:350px;top:680px;width:17px;height:11px;border-radius:50%;background:linear-gradient(180deg,#7aaae0,#3f76c0)"></div>
  <div class="a" style="left:1245px;top:428px;width:17px;height:256px;background:#efefef"></div>
  <div class="a" style="left:1253px;top:465px;width:2px;height:133px;background:#858585"></div>
  <div class="a" style="left:1262px;top:427px;width:1px;height:258px;background:#8a8a8a"></div>
  <div class="a" style="left:62px;top:684px;width:1201px;height:1px;background:#8a8a8a"></div>
</div>
<div id="status" class="a"></div>
<svg class="a" style="left:1195px;top:693px" width="19" height="14" viewBox="0 0 19 14">
  <defs><linearGradient id="eg" x1="0" y1="0" x2="0" y2="1"><stop offset="0" stop-color="#f4f4f4"/><stop offset="1" stop-color="#e4e4e4"/></linearGradient></defs>
  <rect x="1" y="1" width="17" height="12" fill="url(#eg)" stroke="#4a90e2" stroke-width="1.2"/>
  <path d="M1.5 2 L9.5 7 L17.5 2" fill="none" stroke="#4a90e2" stroke-width="1"/>
</svg>
<svg class="a" style="left:1229px;top:689px" width="18" height="19" viewBox="0 0 18 19">
  <path d="M1 1.5 H10.5 L15.5 6 V17.5 H1 Z" fill="#f0f0f2" stroke="#4a90e2" stroke-width="1.2"/>
  <path d="M3 7h9M3 10h9M3 13h9" stroke="#c8c8c8" stroke-width="1.5"/>
  <path d="M5 16 L13 3" stroke="#2090b0" stroke-width="1.4"/>
</svg>
<div class="a" style="left:0;top:0;width:1266px;height:713px;border:1px solid #a9a9a9;border-radius:8px 8px 7px 7px;pointer-events:none"></div>
</body></html>
